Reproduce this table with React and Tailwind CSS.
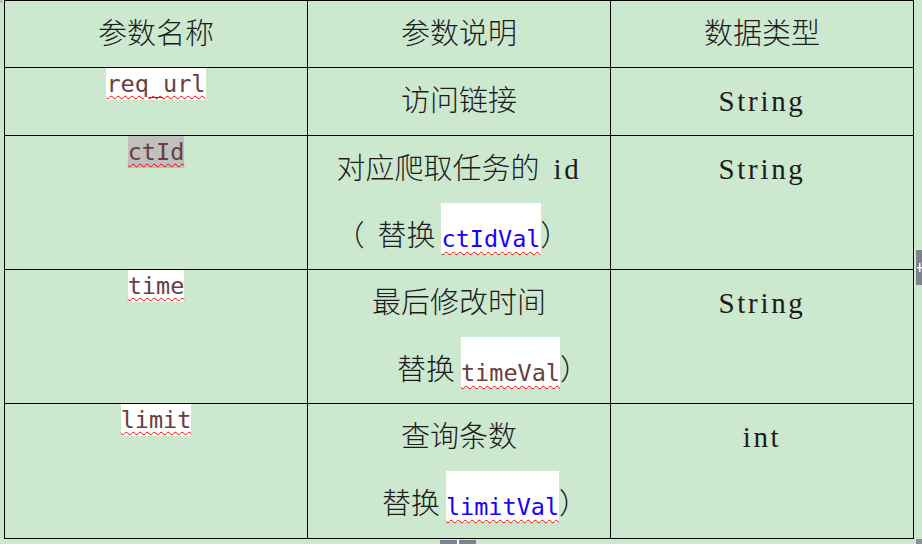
import React from "react";

const cell = "border-r border-b border-black";

function Code({ children, blue, gray, tall }) {
  const color = blue ? "text-[#1a00ff]" : "text-[#6a3e3e]";
  const bg = gray ? "bg-[#c0c0c0]" : "bg-white";
  const size = tall
    ? "block h-[51px] pt-[24px] leading-[24px] underline-offset-[4px]"
    : "inline-block h-[32px] leading-[32px] underline-offset-[3px]";
  return (
    <span
      className={`${size} ${color} ${bg} font-['DejaVu_Sans_Mono',monospace] font-normal text-[23.5px] underline decoration-wavy decoration-[#ff0000] decoration-1 whitespace-pre`}
    >
      {children}
    </span>
  );
}

function Lat({ children }) {
  return <span className="tracking-[2.7px]">{children}</span>;
}

function NameCell({ children }) {
  return <div className={`${cell} flex justify-center items-start`}>{children}</div>;
}

function TextLine({ children, extra = "" }) {
  return <div className={`h-[67px] leading-[67px] text-center whitespace-pre ${extra}`}>{children}</div>;
}

function ReplaceLine({ open, code, blue, pl = "" }) {
  return (
    <div className={`h-[67px] flex justify-center items-start ${pl}`}>
      {open && <span className="inline-block -ml-[13px] mr-[13px] leading-[67px]">（</span>}
      <span className="leading-[67px] whitespace-pre">替换</span>
      <span className="ml-[6px]">
        <Code tall blue={blue}>{code}</Code>
      </span>
      <span className="leading-[67px]">）</span>
    </div>
  );
}

export default function App() {
  return (
    <div className="w-[922px] h-[544px] bg-[#cce8cf] relative overflow-hidden font-['Liberation_Serif','Noto_Sans_CJK_SC',serif] font-light text-[29px] text-[#1c1c1c] [text-spacing-trim:space-all]">
      <div className="ml-[4px] w-[910px] grid grid-cols-[303px_303px_303px] grid-rows-[67px_68px_134px_134px_135px] border-l border-t border-black">
        {/* header */}
        <div className={`${cell} leading-[66px] text-center`}>参数名称</div>
        <div className={`${cell} leading-[66px] text-center`}>参数说明</div>
        <div className={`${cell} leading-[66px] text-center`}>数据类型</div>

        {/* req_url */}
        <NameCell>
          <Code>req_url</Code>
        </NameCell>
        <div className={cell}>
          <TextLine>访问链接</TextLine>
        </div>
        <div className={cell}>
          <TextLine>
            <Lat>String</Lat>
          </TextLine>
        </div>

        {/* ctId */}
        <NameCell>
          <Code gray>ctId</Code>
        </NameCell>
        <div className={cell}>
          <TextLine>
            对应爬取任务的<span className="ml-[14px]"><Lat>id</Lat></span>
          </TextLine>
          <ReplaceLine open code="ctIdVal" blue />
        </div>
        <div className={cell}>
          <TextLine>
            <Lat>String</Lat>
          </TextLine>
        </div>

        {/* time */}
        <NameCell>
          <Code>time</Code>
        </NameCell>
        <div className={cell}>
          <TextLine>最后修改时间</TextLine>
          <ReplaceLine code="timeVal" pl="pl-[68px]" />
        </div>
        <div className={cell}>
          <TextLine>
            <Lat>String</Lat>
          </TextLine>
        </div>

        {/* limit */}
        <NameCell>
          <Code>limit</Code>
        </NameCell>
        <div className={cell}>
          <TextLine>查询条数</TextLine>
          <ReplaceLine code="limitVal" blue pl="pl-[52px]" />
        </div>
        <div className={cell}>
          <TextLine>
            <Lat>int</Lat>
          </TextLine>
        </div>
      </div>

      {/* Word table handles (overlay) */}
      <div className="absolute left-0 top-0 w-[3px] h-[3px] bg-[#b8c4bb]" />
      <div className="absolute left-[916px] top-[250px] w-[6px] h-[35px] bg-[#7d828c]">
        <svg width="6" height="35" viewBox="0 0 6 35" className="block">
          <rect x="1" y="17" width="5" height="1.5" fill="#ffffff" />
          <rect x="3" y="13" width="1.5" height="9" fill="#ffffff" />
        </svg>
      </div>
      <div className="absolute left-[440px] top-[540px] w-[36px] h-[4px] bg-[#7d828c]">
        <div className="ml-[17px] w-[2px] h-[4px] bg-white" />
      </div>
      <div className="absolute left-[916px] top-[539px] w-[6px] h-[5px] bg-[#8a8f99]" />
    </div>
  );
}
